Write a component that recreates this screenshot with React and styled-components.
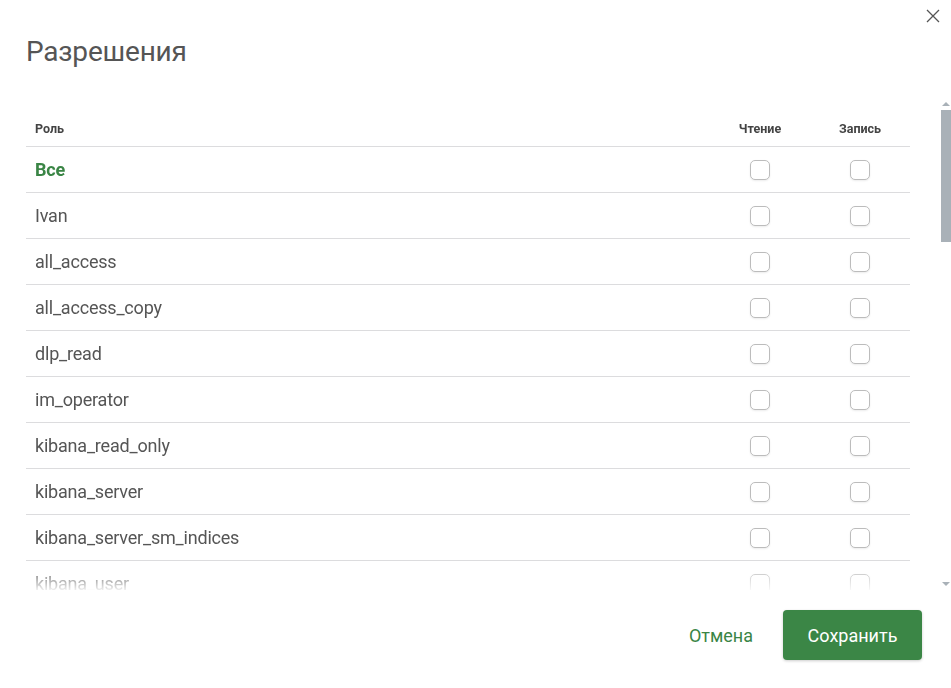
import React from 'react';
import styled, { createGlobalStyle } from 'styled-components';

const GlobalStyle = createGlobalStyle`
  html, body {
    margin: 0;
    padding: 0;
    background: #ffffff;
    font-family: Roboto, "Noto Sans", Arial, sans-serif;
  }
`;

const roles = [
  'Ivan',
  'all_access',
  'all_access_copy',
  'dlp_read',
  'im_operator',
  'kibana_read_only',
  'kibana_server',
  'kibana_server_sm_indices',
  'kibana_user',
];

const Modal = styled.div`
  width: 951px;
  height: 688px;
  display: flex;
  flex-direction: column;
  position: relative;
  background: #fff;
  overflow: hidden;
`;

const Close = styled.button`
  position: absolute;
  top: 8px;
  right: 10px;
  width: 16px;
  height: 16px;
  padding: 0;
  border: none;
  background: none;
  color: #555;
  cursor: pointer;
`;

const Title = styled.h1`
  margin: 0;
  padding: 35px 26px 0;
  height: 63px;
  font-size: 28px;
  font-weight: 400;
  color: #555;
  letter-spacing: -0.2px;
`;

const ScrollArea = styled.div`
  display: flex;
  height: 492px;
`;

const Scroller = styled.div`
  flex: 1;
  overflow: hidden;
  padding: 11px 31px 0 26px;
  -webkit-mask-image: linear-gradient(to bottom, #000 calc(100% - 24px), rgba(0, 0, 0, 0.1) 100%);
  mask-image: linear-gradient(to bottom, #000 calc(100% - 24px), rgba(0, 0, 0, 0.1) 100%);
`;

const Rail = styled.div`
  width: 10px;
  display: flex;
  flex-direction: column;
  align-items: center;
`;

const Arrow = styled.div`
  height: 12px;
  display: flex;
  align-items: center;
  justify-content: center;
`;

const Thumb = styled.div`
  width: 10px;
  height: 132px;
  background: #a9b1b8;
`;

const Spacer = styled.div`
  flex: 1;
`;

const Table = styled.div`
  display: flex;
  flex-direction: column;
`;

const Row = styled.div`
  display: grid;
  grid-template-columns: 1fr 100px 100px;
  align-items: center;
  height: ${(p) => (p.$head ? '37px' : '45px')};
  border-bottom: 1px solid #dcdcde;
`;

const HeadCell = styled.div`
  font-size: 12.5px;
  font-weight: 700;
  color: #444;
  padding-left: ${(p) => (p.$center ? '0' : '9px')};
  text-align: ${(p) => (p.$center ? 'center' : 'left')};
  padding-top: 1px;
`;

const Name = styled.div`
  padding-left: 9px;
  font-size: 18px;
  color: ${(p) => (p.$all ? '#3a8545' : '#555')};
  font-weight: ${(p) => (p.$all ? 700 : 400)};
  letter-spacing: -0.2px;
`;

const CheckCell = styled.div`
  display: flex;
  justify-content: center;
`;

const Box = styled.span`
  width: 18px;
  height: 18px;
  border: 1px solid #bcbcbc;
  border-radius: 5px;
  box-shadow: 0 1px 2px rgba(0, 0, 0, 0.08);
  background: #fff;
`;

const Footer = styled.div`
  flex: 1;
  display: flex;
  justify-content: flex-end;
  align-items: flex-start;
  gap: 14px;
  padding: 20px 29px 0 0;
`;

const TextButton = styled.button`
  height: 50px;
  padding: 0 16px;
  border: none;
  background: none;
  font-family: inherit;
  font-size: 18px;
  color: #3a8545;
  cursor: pointer;
`;

const PrimaryButton = styled.button`
  width: 139px;
  height: 50px;
  border: none;
  border-radius: 4px;
  background: #3b8646;
  color: #fff;
  font-family: inherit;
  font-size: 18px;
  box-shadow: 0 1px 3px rgba(0, 0, 0, 0.2);
  cursor: pointer;
`;

const Triangle = ({ up }) => (
  <svg width="8" height="4" viewBox="0 0 8 4">
    <path d={up ? 'M0 4 L4 0 L8 4 Z' : 'M0 0 L4 4 L8 0 Z'} fill="#a9b1b8" />
  </svg>
);

const App = () => (
  <>
    <GlobalStyle />
    <Modal>
      <Close aria-label="Закрыть">
        <svg width="16" height="16" viewBox="0 0 16 16">
          <path d="M2 2 L14 14 M14 2 L2 14" stroke="#555" strokeWidth="1.3" />
        </svg>
      </Close>
      <Title>Разрешения</Title>
      <ScrollArea>
        <Scroller>
          <Table>
            <Row $head>
              <HeadCell>Роль</HeadCell>
              <HeadCell $center>Чтение</HeadCell>
              <HeadCell $center>Запись</HeadCell>
            </Row>
            <Row>
              <Name $all>Все</Name>
              <CheckCell><Box /></CheckCell>
              <CheckCell><Box /></CheckCell>
            </Row>
            {roles.map((r) => (
              <Row key={r}>
                <Name>{r}</Name>
                <CheckCell><Box /></CheckCell>
                <CheckCell><Box /></CheckCell>
              </Row>
            ))}
          </Table>
        </Scroller>
        <Rail>
          <Arrow><Triangle up /></Arrow>
          <Thumb />
          <Spacer />
          <Arrow><Triangle /></Arrow>
        </Rail>
      </ScrollArea>
      <Footer>
        <TextButton>Отмена</TextButton>
        <PrimaryButton>Сохранить</PrimaryButton>
      </Footer>
    </Modal>
  </>
);

export default App;
